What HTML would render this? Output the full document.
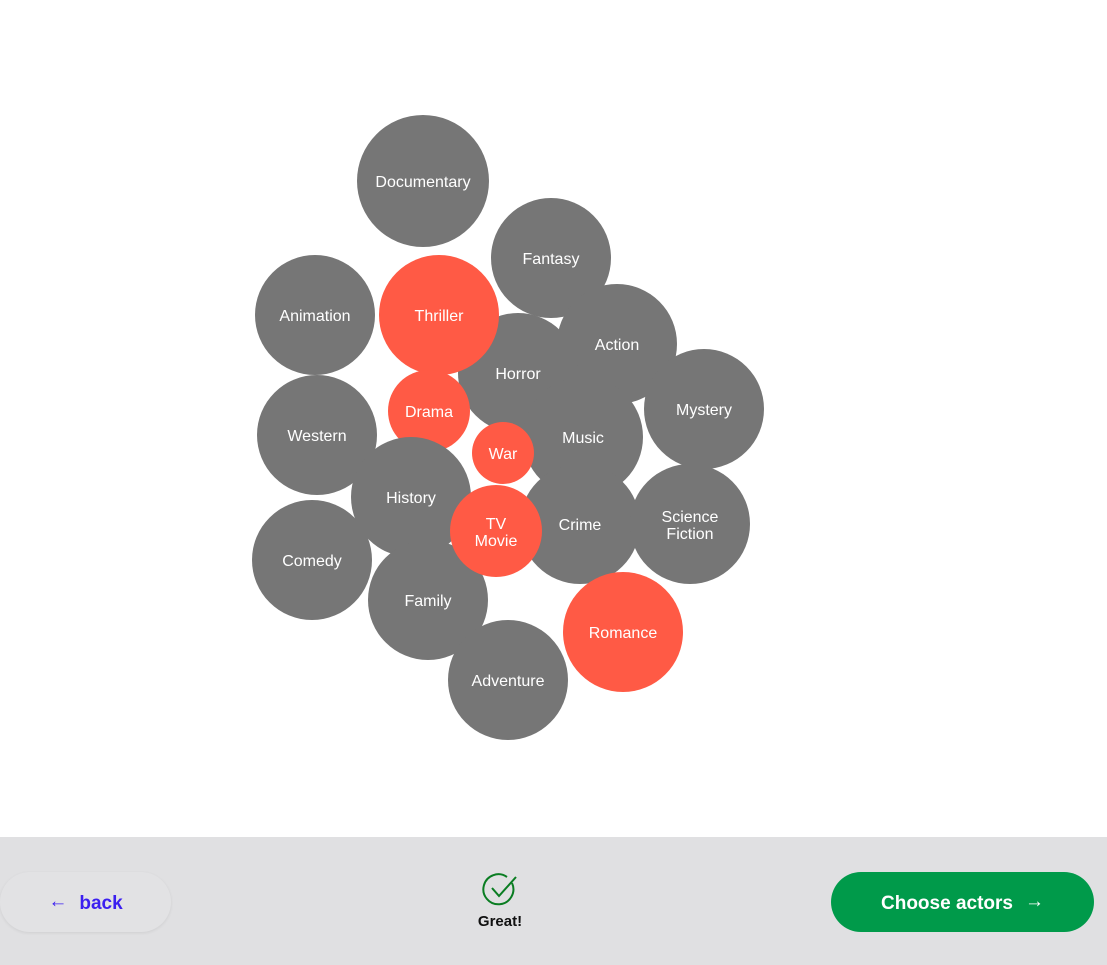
<!DOCTYPE html>
<html><head><style>
body{margin:0;width:1107px;height:965px;position:relative;background:#fff;font-family:"Liberation Sans",sans-serif;overflow:hidden}
.c{position:absolute;border-radius:50%;background:#767676;color:#fff;display:flex;align-items:center;justify-content:center;text-align:center;font-size:16px;line-height:17px;box-sizing:border-box;padding-top:3px}
.r{background:#FF5A45}
.bar{position:absolute;left:0;top:837px;width:1107px;height:128px;background:#e0e0e2}
.back{position:absolute;left:0;top:872px;width:171px;height:60px;border-radius:30px;background:#e2e2e4;box-shadow:0 1px 3px rgba(0,0,0,.08);color:#3b1ff0;font-size:19px;font-weight:bold;display:flex;align-items:center;justify-content:center;box-sizing:border-box;padding-top:4px}
.next{position:absolute;left:831px;top:872px;width:263px;height:60px;border-radius:30px;background:#009a4a;color:#fff;font-size:19px;font-weight:bold;display:flex;align-items:center;justify-content:center;box-sizing:border-box;padding-top:4px}
</style></head><body>
<div class="c" style="left:357px;top:115px;width:132px;height:132px">Documentary</div>
<div class="c" style="left:491px;top:198px;width:120px;height:120px">Fantasy</div>
<div class="c" style="left:255px;top:255px;width:120px;height:120px">Animation</div>
<div class="c" style="left:557px;top:284px;width:120px;height:120px">Action</div>
<div class="c" style="left:458px;top:313px;width:120px;height:120px">Horror</div>
<div class="c r" style="left:379px;top:255px;width:120px;height:120px">Thriller</div>
<div class="c" style="left:644px;top:349px;width:120px;height:120px">Mystery</div>
<div class="c" style="left:523px;top:377px;width:120px;height:120px">Music</div>
<div class="c r" style="left:388px;top:370px;width:82px;height:82px">Drama</div>
<div class="c" style="left:257px;top:375px;width:120px;height:120px">Western</div>
<div class="c" style="left:520px;top:464px;width:120px;height:120px">Crime</div>
<div class="c" style="left:630px;top:464px;width:120px;height:120px">Science<br>Fiction</div>
<div class="c" style="left:351px;top:437px;width:120px;height:120px">History</div>
<div class="c r" style="left:472px;top:422px;width:62px;height:62px">War</div>
<div class="c" style="left:252px;top:500px;width:120px;height:120px">Comedy</div>
<div class="c" style="left:368px;top:540px;width:120px;height:120px">Family</div>
<div class="c r" style="left:450px;top:485px;width:92px;height:92px">TV<br>Movie</div>
<div class="c" style="left:448px;top:620px;width:120px;height:120px">Adventure</div>
<div class="c r" style="left:563px;top:572px;width:120px;height:120px">Romance</div>
<div class="bar"></div>
<div class="back"><span style="font-weight:normal;margin-right:12px;position:relative;top:-2px">←</span>back</div>
<svg style="position:absolute;left:482px;top:872px" width="36" height="36" viewBox="0 0 36 36"><path d="M30 11 A15 15 0 1 1 25 5" fill="none" stroke="#0a7d22" stroke-width="2"/><path d="M10 16 L17 24 L34 5" fill="none" stroke="#0a7d22" stroke-width="2"/></svg>
<div style="position:absolute;left:460px;top:913px;width:80px;text-align:center;font-size:15px;font-weight:bold;color:#111">Great!</div>
<div class="next">Choose actors<span style="font-weight:normal;margin-left:12px;position:relative;top:-2px">→</span></div>
</body></html>
